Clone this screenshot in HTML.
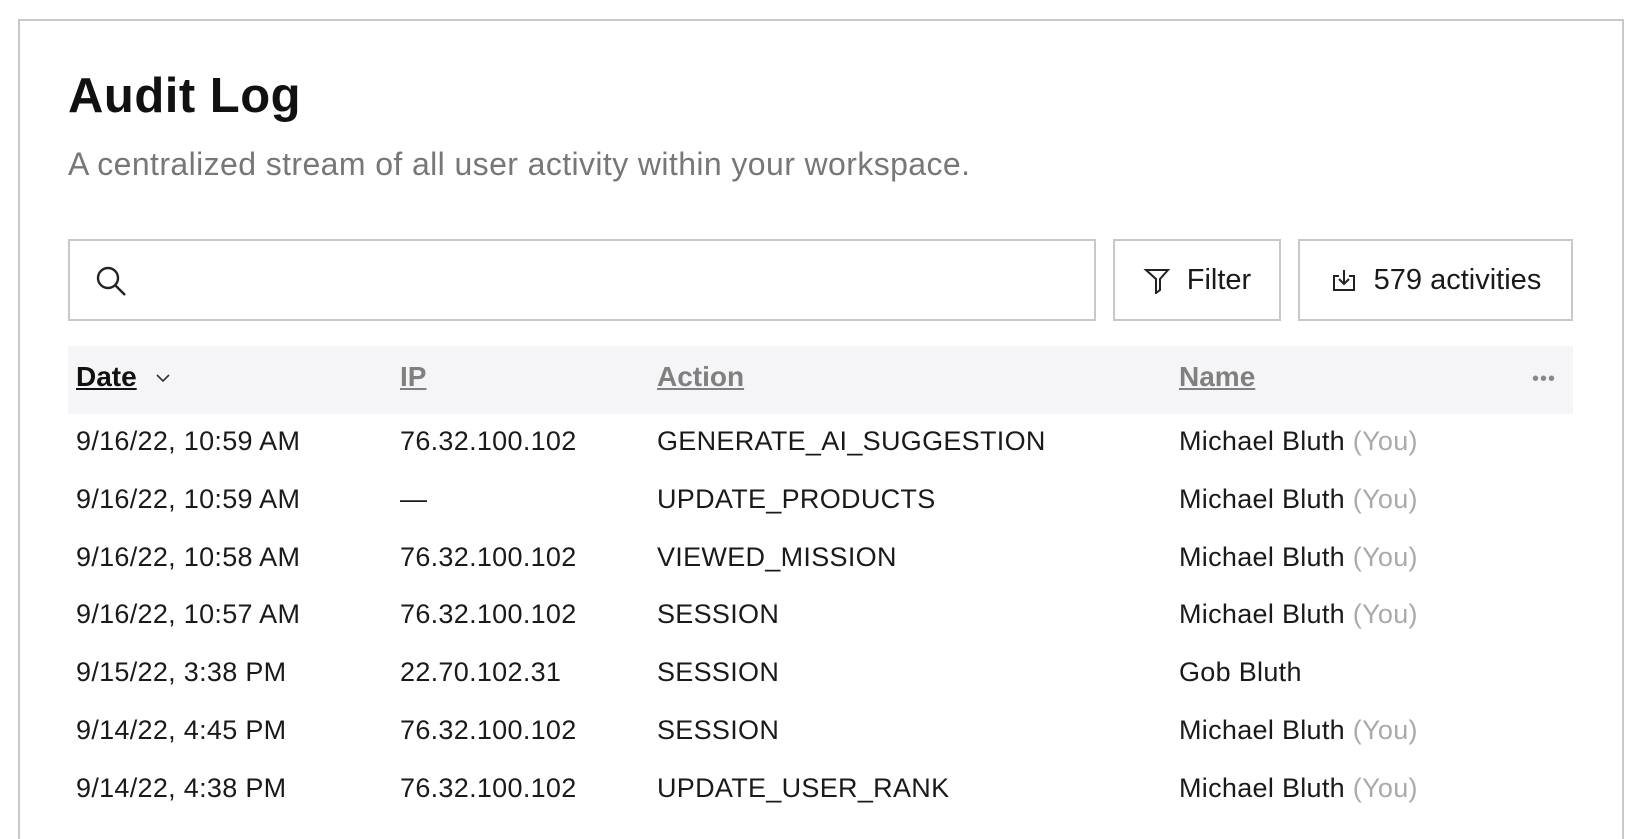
<!DOCTYPE html>
<html><head><meta charset="utf-8"><style>
*{margin:0;padding:0;box-sizing:border-box}
body{width:1642px;height:814px;background:#fff;font-family:"Liberation Sans",sans-serif;color:#1a1a1a;overflow:hidden;position:relative}
.card{position:absolute;left:18px;top:19px;width:1606px;height:820px;border:2px solid #c8c8c8;border-bottom:none}
.abs{position:absolute;white-space:nowrap}
h1{position:absolute;left:68px;top:68px;font-size:49px;font-weight:bold;color:#111;letter-spacing:0.5px}
.sub{left:68px;top:146px;font-size:32px;color:#777;letter-spacing:0.4px}
.box{position:absolute;border:2px solid #c8c8c8;top:239px;height:82px}
.btn{font-size:29px;display:flex;align-items:center;justify-content:center;gap:16px}
.hdr{position:absolute;left:68px;top:346px;width:1505px;height:68px;background:#f5f4f6}
.th{font-weight:bold;font-size:28px;text-decoration:underline;color:#808080;top:361px}
.td{font-size:27px;color:#1a1a1a;letter-spacing:0.3px}
.you{color:#aaa}
</style></head><body>
<div class="card"></div>
<h1>Audit Log</h1>
<div class="abs sub">A centralized stream of all user activity within your workspace.</div>
<div class="box" style="left:68px;width:1028px">
<svg style="position:absolute;left:25px;top:24px" width="32" height="32" viewBox="0 0 32 32" fill="none" stroke="#222" stroke-width="2.4"><circle cx="13" cy="13" r="10"/><path d="M20.5 20.5L30 30"/></svg>
</div>
<div class="box btn" style="left:1113px;width:168px">
<svg width="28" height="28" viewBox="0 0 28 28" fill="none" stroke="#222" stroke-width="2"><path d="M3 4h22l-8 9v11l-4 3V13z"/></svg><span>Filter</span></div>
<div class="box btn" style="left:1298px;width:275px">
<svg width="28" height="28" viewBox="0 0 28 28" fill="none" stroke="#222" stroke-width="2"><path d="M9 10H4v14h20V10h-5M14 4v14M9 13l5 5 5-5"/></svg><span>579 activities</span></div>
<div class="hdr"></div>
<div class="abs th" style="left:76px;color:#111">Date</div>
<svg class="abs" style="left:155px;top:372px" width="16" height="12" viewBox="0 0 16 12" fill="none" stroke="#333" stroke-width="1.6"><path d="M2 3l6 6 6-6"/></svg>
<div class="abs th" style="left:400px">IP</div>
<div class="abs th" style="left:657px">Action</div>
<div class="abs th" style="left:1179px">Name</div>
<div class="abs" style="left:1532px;top:368px;font-size:20px;color:#888;letter-spacing:1px">•••</div>
<div id="rows"></div>
<script>
var d=[["9/16/22, 10:59 AM","76.32.100.102","GENERATE_AI_SUGGESTION","Michael Bluth",1],
["9/16/22, 10:59 AM","—","UPDATE_PRODUCTS","Michael Bluth",1],
["9/16/22, 10:58 AM","76.32.100.102","VIEWED_MISSION","Michael Bluth",1],
["9/16/22, 10:57 AM","76.32.100.102","SESSION","Michael Bluth",1],
["9/15/22, 3:38 PM","22.70.102.31","SESSION","Gob Bluth",0],
["9/14/22, 4:45 PM","76.32.100.102","SESSION","Michael Bluth",1],
["9/14/22, 4:38 PM","76.32.100.102","UPDATE_USER_RANK","Michael Bluth",1]];
var h="";d.forEach(function(r,i){var t=426+i*57.8;
h+='<div class="abs td" style="left:76px;top:'+t+'px">'+r[0]+'</div><div class="abs td" style="left:400px;top:'+t+'px">'+r[1]+'</div><div class="abs td" style="left:657px;top:'+t+'px">'+r[2]+'</div><div class="abs td" style="left:1179px;top:'+t+'px">'+r[3]+(r[4]?' <span class="you">(You)</span>':'')+'</div>';});
document.getElementById("rows").innerHTML=h;
</script>
</body></html>
